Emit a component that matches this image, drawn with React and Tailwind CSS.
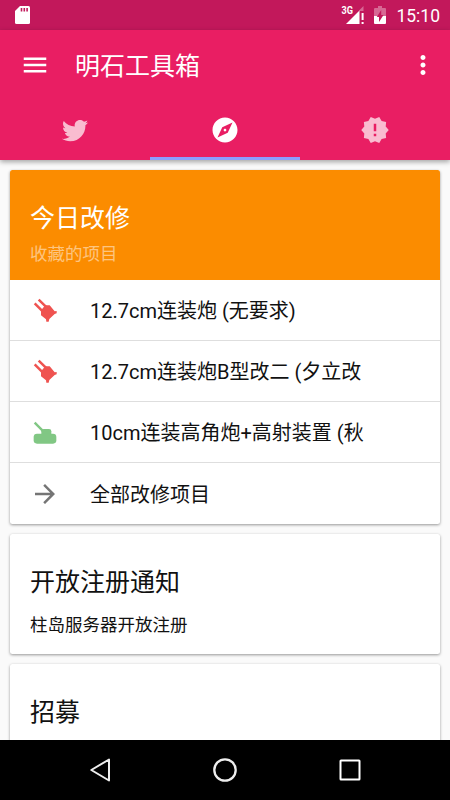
import { MdArrowForward, MdExplore, MdMenu, MdMoreVert, MdNewReleases } from 'react-icons/md'

const TWIN_GUN = 'twin'
const AA_GUN = 'aa'

const items = [
  { icon: TWIN_GUN, label: '12.7cm连装炮 (无要求)' },
  { icon: TWIN_GUN, label: '12.7cm连装炮B型改二 (夕立改' },
  { icon: AA_GUN, label: '10cm连装高角炮+高射装置 (秋' },
  { icon: 'more', label: '全部改修项目' },
]

function TwitterIcon() {
  return (
    <svg viewBox="0 0 24 24" className="size-[30px]" fill="currentColor">
      <path d="M22.46,6C21.69,6.35 20.86,6.58 20,6.69C20.88,6.16 21.56,5.32 21.88,4.31C21.05,4.81 20.13,5.16 19.16,5.36C18.37,4.5 17.26,4 16,4C13.65,4 11.73,5.92 11.73,8.29C11.73,8.63 11.77,8.96 11.84,9.27C8.28,9.09 5.11,7.38 3,4.79C2.63,5.42 2.42,6.16 2.42,6.94C2.42,8.43 3.17,9.75 4.33,10.5C3.62,10.5 2.96,10.3 2.38,10C2.38,10 2.38,10 2.38,10.03C2.38,12.11 3.86,13.85 5.82,14.24C5.46,14.34 5.08,14.39 4.69,14.39C4.42,14.39 4.15,14.36 3.89,14.31C4.43,16 6,17.26 7.89,17.29C6.43,18.45 4.58,19.13 2.56,19.13C2.22,19.13 1.88,19.11 1.54,19.07C3.44,20.29 5.7,21 8.12,21C16,21 20.33,14.46 20.33,8.79C20.33,8.6 20.33,8.42 20.32,8.23C21.16,7.63 21.88,6.87 22.46,6Z" />
    </svg>
  )
}

function ItemIcon({ type }) {
  if (type === TWIN_GUN) {
    return (
      <svg viewBox="0 0 90 90" className="size-[30px] text-[#ef5350]" fill="currentColor" stroke="currentColor">
        <path d="M14 25 44 55M26 14 56 43" strokeWidth="7.5" fill="none" />
        <path d="M46 31H59L74 49 80 48V55L74 57 58 72 56 80H49L48 73 33 61V46Z" stroke="none" />
      </svg>
    )
  }
  if (type === AA_GUN) {
    return (
      <svg viewBox="0 0 90 90" className="size-[30px] text-[#81c784]" fill="currentColor">
        <path d="M14 17 40 43" stroke="currentColor" strokeWidth="7" />
        <rect x="34" y="36" width="30" height="24" rx="7" />
        <rect x="11" y="50" width="68" height="30" rx="10" />
      </svg>
    )
  }
  return <MdArrowForward className="size-[30px] text-[#757575]" />
}

function StatusBar() {
  return (
    <div className="flex h-[30px] shrink-0 items-center bg-[#c2185b] pr-[10px] pl-[15px] text-white">
      <svg viewBox="0 0 15 18" className="h-[18px] w-[15px]">
        <path d="M5 0H13.5Q15 0 15 1.5V16.5Q15 18 13.5 18H1.5Q0 18 0 16.5V5Z" fill="#fff" />
        <path d="M6.5 2V5.5M9.3 2V5.5M12.1 2V5.5" stroke="#c2185b" strokeWidth="1.6" />
      </svg>
      <svg viewBox="0 0 24 18" className="ml-auto h-[18px] w-[24px]">
        <path d="M19 4.5 23.5 0V5H19Z" fill="#fff" opacity=".35" />
        <path d="M6 18 19.5 4.5V18Z" fill="#fff" />
        <path d="M22.6 7V14M22.6 16V18" stroke="#fff" strokeWidth="2" />
        <text x="1.5" y="8" fill="#fff" fontSize="10" fontWeight="700" fontFamily="Roboto, sans-serif" textLength="11.5" lengthAdjust="spacingAndGlyphs">3G</text>
      </svg>
      <svg viewBox="0 0 12 18" className="ml-[10px] h-[18px] w-[12px]">
        <path d="M4 0H8V2H11Q12 2 12 3V10H0V3Q0 2 1 2H4Z" fill="#fff" opacity=".35" />
        <path d="M0 10H12V17Q12 18 11 18H1Q0 18 0 17Z" fill="#fff" />
        <path d="M7.2 4V9H9.5L5 16V11H2.8Z" fill="#c2185b" />
      </svg>
      <span className="ml-[10px] pt-[2px] text-[17.5px] leading-[28px] font-[450]">15:10</span>
    </div>
  )
}

function AppBar() {
  return (
    <header className="relative z-10 shrink-0 bg-[#e91e63] text-white shadow-[0_2px_5px_rgba(0,0,0,0.35)]">
      <div className="flex h-[70px] items-center pr-[12px] pl-5">
        <MdMenu className="size-[30px]" />
        <h1 className="ml-[25px] pt-[3px] text-[25px] leading-[30px]">明石工具箱</h1>
        <MdMoreVert className="ml-auto size-[30px]" />
      </div>
      <nav className="grid h-[60px] grid-cols-3">
        <div className="flex items-center justify-center text-white/70">
          <TwitterIcon />
        </div>
        <div className="flex items-center justify-center border-b-3 border-[#8c9eff] pt-[3px]">
          <MdExplore className="size-[30px]" />
        </div>
        <div className="flex items-center justify-center text-white/70">
          <MdNewReleases className="size-[30px]" />
        </div>
      </nav>
    </header>
  )
}

function Card({ className = '', children }) {
  return (
    <section className={`shrink-0 overflow-hidden rounded-[2.5px] bg-white shadow-[0_1px_3px_rgba(0,0,0,0.4)] ${className}`}>
      {children}
    </section>
  )
}

function NavBar() {
  return (
    <div className="grid h-[60px] shrink-0 grid-cols-[1fr_150px_1fr] bg-black px-[50px]">
      <svg viewBox="0 0 30 30" className="mt-[15px] ml-[35px] size-[30px]" fill="none" stroke="#eee" strokeWidth="2">
        <path d="M6.3 15 24 4.5V25.5Z" strokeLinejoin="round" />
      </svg>
      <svg viewBox="0 0 30 30" className="mt-[15px] size-[30px] justify-self-center" fill="none" stroke="#eee" strokeWidth="2.3">
        <circle cx="15" cy="15" r="10.7" />
      </svg>
      <svg viewBox="0 0 30 30" className="mt-[15px] mr-[35px] size-[30px] justify-self-end" fill="none" stroke="#fff" strokeWidth="2">
        <rect x="5.5" y="5.5" width="19" height="19" rx="0.5" />
      </svg>
    </div>
  )
}

export default function App() {
  return (
    <div className="flex h-[800px] w-[450px] flex-col overflow-hidden bg-[#fafafa] font-[Roboto,'Noto_Sans_CJK_SC',sans-serif] text-[#111]">
      <StatusBar />
      <AppBar />
      <main className="flex min-h-0 flex-1 flex-col gap-[10px] overflow-hidden p-[10px]">
        <Card>
          <div className="h-[110px] bg-[#fb8c00] px-5 pt-[34px]">
            <h2 className="text-[25px] leading-[30px] text-white">今日改修</h2>
            <p className="mt-[10px] text-[17.5px] leading-[21px] text-white/50">收藏的项目</p>
          </div>
          <ul className="divide-y divide-[#dedede]">
            {items.map((item) => (
              <li key={item.label} className="flex h-[61px] items-center pl-5">
                <ItemIcon type={item.icon} />
                <span className="ml-[30px] pt-[2px] text-[20px] leading-6 whitespace-nowrap">{item.label}</span>
              </li>
            ))}
          </ul>
        </Card>
        <Card className="h-[120px] px-5 pt-[34px]">
          <h2 className="text-[25px] leading-[30px]">开放注册通知</h2>
          <p className="mt-[17px] text-[17.5px] leading-[21px]">柱岛服务器开放注册</p>
        </Card>
        <Card className="h-[120px] px-5 pt-[34px]">
          <h2 className="text-[25px] leading-[30px]">招募</h2>
        </Card>
      </main>
      <NavBar />
    </div>
  )
}
